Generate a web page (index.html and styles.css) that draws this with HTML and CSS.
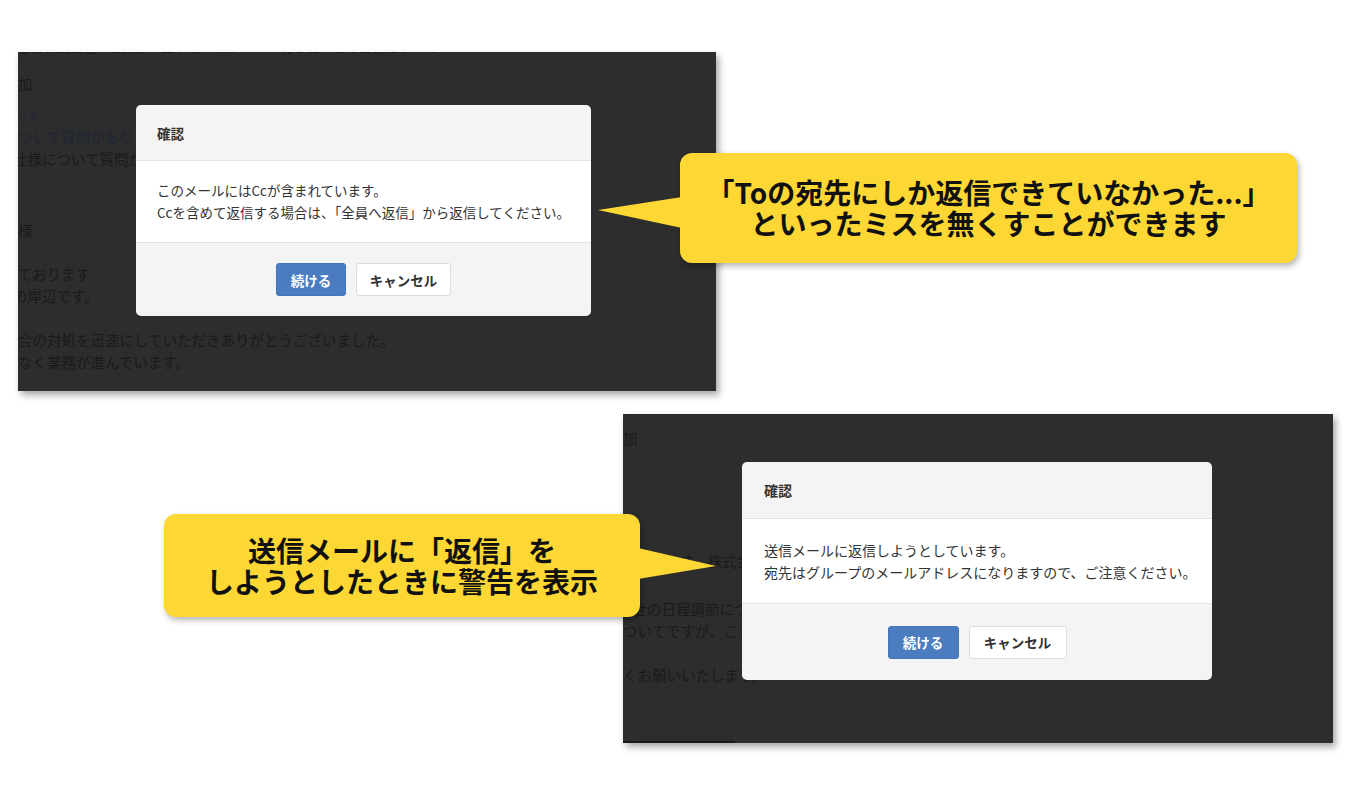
FILE: index.html
```html
<html>

<head>
  <meta charset="utf-8">
  <link rel="stylesheet" href="styles.css">
</head>

<body>
  <div id="canvas">
    <!-- first screenshot: Cc warning -->
    <div id="shot-cc" class="shot">
      <div class="page">
        <p class="line cut-top">〇〇株式会社　営業部　田中様　ほか　　　 打ち合わせの日程について</p>
        <p class="line l-head">加</p>
        <p class="line tiny link">じる</p>
        <p class="line link">ついて質問がありま</p>
        <p class="line shift">仕様について質問が</p>
        <p class="line l-name">様</p>
        <p class="line l-greet">ております</p>
        <p class="line shift">の岸辺です。</p>
        <p class="line l-para">合の対処を迅速にしていただきありがとうございました。</p>
        <p class="line">なく業務が進んでいます。</p>
      </div>
      <div class="dialog">
        <div class="dialog-head">確認</div>
        <div class="dialog-body">
          <p>このメールにはCcが含まれています。</p>
          <p>Ccを含めて返信する場合は、「全員へ返信」から返信してください。</p>
        </div>
        <div class="dialog-foot">
          <button class="btn btn-primary">続ける</button>
          <button class="btn">キャンセル</button>
        </div>
      </div>
    </div>

    <div id="note-cc" class="callout">
      <svg class="tail tail-left" width="84" height="40" viewBox="0 0 84 40">
        <polygon points="84,3 0,16 84,34" fill="#fdd835" />
      </svg>
      <p>「Toの宛先にしか返信できていなかった...」<br>といったミスを無くすことができます</p>
    </div>

    <!-- second screenshot: reply to sent mail -->
    <div id="shot-sent" class="shot">
      <div class="page">
        <p class="line l-head2">加</p>
        <p class="line l-corp">す。株式会社</p>
        <p class="line l-sched shift">わせの日程調節について</p>
        <p class="line">ついてですが、こちら</p>
        <p class="line l-para">くお願いいたします。</p>
      </div>
      <div class="edge"></div>
      <div class="dialog">
        <div class="dialog-head">確認</div>
        <div class="dialog-body">
          <p>送信メールに返信しようとしています。</p>
          <p>宛先はグループのメールアドレスになりますので、ご注意ください。</p>
        </div>
        <div class="dialog-foot">
          <button class="btn btn-primary">続ける</button>
          <button class="btn">キャンセル</button>
        </div>
      </div>
    </div>

    <div id="note-sent" class="callout">
      <svg class="tail tail-right" width="80" height="40" viewBox="0 0 80 40">
        <polygon points="0,6 78,24 0,37" fill="#fdd835" />
      </svg>
      <p>送信メールに「返信」を<br>しようとしたときに警告を表示</p>
    </div>
  </div>
</body>

</html>
```

FILE: styles.css
```css
body {
  margin: 0;
  padding: 0;
  background: #fff;
  font-family: "Noto Sans CJK JP", "Noto Sans", sans-serif;
}

p {
  margin: 0;
}

#canvas {
  position: relative;
  width: 1358px;
  height: 802px;
  overflow: hidden;
}

/* screenshots */
.shot {
  position: absolute;
  overflow: hidden;
  background: #2d2d2d;
  box-shadow: 3px 4px 7px rgba(0, 0, 0, 0.35);
}

#shot-cc {
  left: 18px;
  top: 52px;
  width: 698px;
  height: 339px;
}

#shot-sent {
  left: 623px;
  top: 414px;
  width: 710px;
  height: 329px;
}

.page {
  display: flex;
  flex-direction: column;
  color: #1a1a1a;
  font-size: 14.5px;
  line-height: 22px;
  white-space: nowrap;
}

.page .line.shift {
  margin-left: -5px;
}

.page .link {
  color: #1e2634;
}

.page .tiny {
  font-size: 10px;
  line-height: 14px;
  margin-top: 15px;
  margin-bottom: 2px;
}

.page .cut-top {
  margin-top: -16px;
  font-size: 13px;
}

.page .l-head {
  margin-top: 15px;
}

.page .l-name {
  margin-top: 49px;
}

.page .l-greet {
  margin-top: 22px;
}

.page .l-para {
  margin-top: 22px;
}

.page .l-head2 {
  margin-top: 13px;
}

.page .l-corp {
  margin-top: 101px;
  margin-left: 57px;
}

.page .l-sched {
  margin-top: 26px;
}

.edge {
  position: absolute;
  left: 0;
  bottom: 0;
  width: 112px;
  height: 2px;
  background: #1a1a1a;
}

/* modal dialogs */
.dialog {
  position: absolute;
  display: flex;
  flex-direction: column;
  background: #f4f4f4;
  border-radius: 5px;
  overflow: hidden;
  color: #333;
  font-size: 13.5px;
}

#shot-cc .dialog {
  left: 118px;
  top: 53px;
  width: 455px;
  height: 211px;
}

#shot-sent .dialog {
  left: 119px;
  top: 48px;
  width: 470px;
  height: 218px;
  font-size: 14px;
}

.dialog-head {
  display: flex;
  align-items: center;
  height: 55px;
  padding: 0 21px;
  font-weight: bold;
  border-bottom: 1px solid #e3e3e3;
}

.dialog-body {
  background: #fff;
  padding: 18px 21px 19px;
  line-height: 22px;
  border-bottom: 1px solid #e3e3e3;
  white-space: nowrap;
}

.dialog-foot {
  flex: 1;
  display: flex;
  justify-content: center;
  align-items: center;
  gap: 10px;
}

#shot-sent .dialog-head {
  height: 56px;
  padding: 0 22px;
}

#shot-sent .dialog-body {
  padding: 20px 22px 20px;
}

.btn {
  font-family: "Noto Sans CJK JP", "Noto Sans", sans-serif;
  font-size: 13.5px;
  font-weight: bold;
  height: 33px;
  padding: 0;
  white-space: nowrap;
  border: 1px solid #dcdcdc;
  border-radius: 3px;
  background: #fff;
  color: #333;
}

.btn-primary {
  background: #4a7cbf;
  border-color: #4475b5;
  color: #fff;
}

#shot-cc .btn {
  width: 95px;
}

#shot-cc .btn-primary {
  width: 70px;
}

#shot-sent .btn {
  width: 98px;
}

#shot-sent .btn-primary {
  width: 71px;
}

/* yellow callouts */
.callout {
  position: absolute;
  display: flex;
  align-items: center;
  justify-content: center;
  background: #fdd835;
  border-radius: 12px;
  box-shadow: 2px 3px 6px rgba(0, 0, 0, 0.3);
  color: #111;
  font-size: 28px;
  font-weight: bold;
  line-height: 31px;
  text-align: center;
}

#note-cc {
  left: 680px;
  top: 153px;
  width: 617px;
  height: 110px;
}

#note-sent {
  left: 164px;
  top: 514px;
  width: 476px;
  height: 103px;
}

.tail {
  position: absolute;
}

.tail-left {
  left: -82px;
  top: 41px;
}

.tail-right {
  right: -78px;
  top: 28px;
}
```
